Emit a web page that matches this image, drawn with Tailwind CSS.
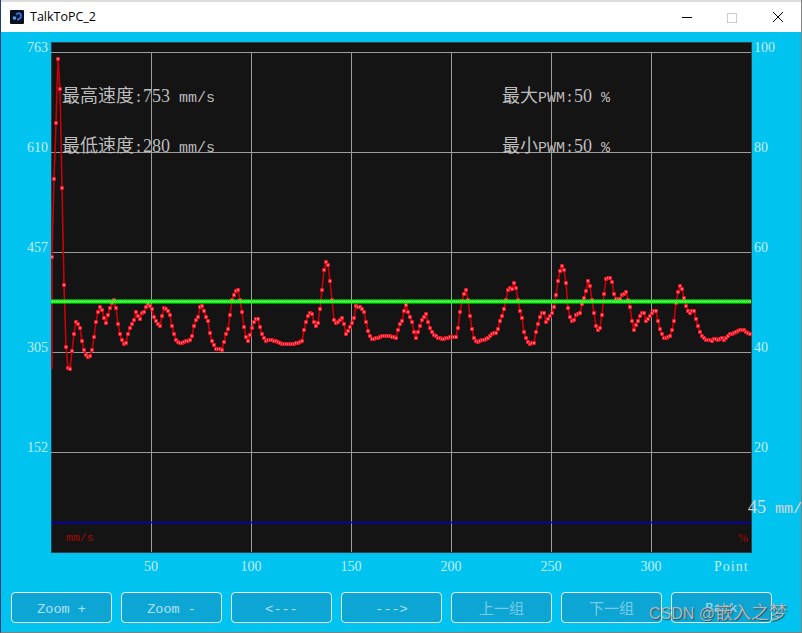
<!DOCTYPE html>
<html>
<head>
<meta charset="utf-8">
<script src="https://cdn.jsdelivr.net/npm/@tailwindcss/browser@4"></script>
</head>
<body class="bg-[#00c3ef]">
<div class="w-[802px] h-[633px] overflow-hidden relative flex flex-col bg-[#00c3ef] border-l border-l-[#1c3f7c] border-r border-r-[#808080] border-b border-b-[#808080] font-['Liberation_Serif','Noto_Sans_CJK_SC',serif]">
  <!-- top strip + title bar -->
  <div class="h-[2px] bg-[#dcdcdc] shrink-0"></div>
  <div class="h-[30px] bg-white flex items-center shrink-0 relative">
    <svg class="ml-[9px] w-[14px] h-[14px]" viewBox="0 0 14 14">
      <rect width="14" height="14" rx="1" fill="#0a0f1e"/>
      <path d="M6 4.5 C8 2.5 11 3 11 5.5 C11 8 9 9.5 7 9.5" fill="none" stroke="#2f6fe0" stroke-width="2"/>
      <circle cx="4.5" cy="8" r="1.8" fill="#5aa0f0"/>
    </svg>
    <span class="ml-[6px] text-[12.5px] text-black font-['Open_Sans',sans-serif]">TalkToPC_2</span>
    <svg class="ml-auto mr-[33px] w-[12px] h-[12px]" viewBox="0 0 12 12"><path d="M1 6.5 H11" stroke="#000" fill="none"/></svg>
    <svg class="mr-[35px] w-[11px] h-[11px]" viewBox="0 0 11 11"><rect x="1.5" y="1.5" width="9" height="9" fill="none" stroke="#cccccc"/></svg>
    <svg class="mr-[17px] w-[12px] h-[12px]" viewBox="0 0 12 12"><path d="M1 1 L11 11 M11 1 L1 11" stroke="#000" fill="none"/></svg>
  </div>

  <!-- chart row -->
  <div class="flex h-[521px] pt-[10px] shrink-0">
    <!-- left axis -->
    <div class="w-[50px] shrink-0 flex flex-col items-end pr-[3px] text-[14px] leading-[14px] text-[#c4edf8]">
      <span class="h-[100px] mt-[-1px]">763</span>
      <span class="h-[100px]">610</span>
      <span class="h-[100px]">457</span>
      <span class="h-[100px]">305</span>
      <span class="h-[100px]">152</span>
    </div>
    <!-- plot -->
    <div class="relative w-[701px] h-[511px] shrink-0 bg-[#141414] border border-[#3a3f44]">
      <svg id="plot" class="absolute left-[-1px] top-[-1px]" width="701" height="511" viewBox="51 42 701 511">
        <defs>
          <marker id="dot" markerUnits="userSpaceOnUse" markerWidth="6" markerHeight="6" refX="3" refY="3" overflow="visible">
            <rect x="1" y="1" width="4" height="4" rx="0.8" fill="#f01020"/>
            <rect x="2.3" y="2.3" width="1.4" height="1.4" fill="#ffd8d8"/>
          </marker>
        </defs>
        <g stroke="#9c9c9c" stroke-width="1" shape-rendering="crispEdges" fill="none">
          <path d="M51 52.5H751 M51 152.5H751 M51 252.5H751 M51 352.5H751 M51 452.5H751"/>
          <path d="M151.5 52V552 M251.5 52V552 M351.5 52V552 M451.5 52V552 M551.5 52V552 M651.5 52V552"/>
        </g>
        <path d="M51 522.5H751" stroke="#0000c8" stroke-width="1.4" fill="none"/>
        <polyline id="curve" fill="none" stroke="#c80008" stroke-width="1.6" stroke-linejoin="round" marker-mid="url(#dot)" marker-end="url(#dot)"/>
        <path d="M50 301.5H751" stroke="#10ff10" stroke-width="4" fill="none"/>
        <path d="M50 301.5H751" stroke="#b8ffb8" stroke-width="1.2" stroke-dasharray="1 1" fill="none"/>
      </svg>
      <div class="absolute left-[10px] top-[43px] text-[#bdbdbd] text-[18px] leading-[20px] whitespace-nowrap">最高速度<span class="font-['Liberation_Mono',monospace] text-[15px]">:</span>753<span class="font-['Liberation_Mono',monospace] text-[15px]"> mm/s</span></div>
      <div class="absolute left-[10px] top-[93px] text-[#bdbdbd] text-[18px] leading-[20px] whitespace-nowrap">最低速度<span class="font-['Liberation_Mono',monospace] text-[15px]">:</span>280<span class="font-['Liberation_Mono',monospace] text-[15px]"> mm/s</span></div>
      <div class="absolute left-[450px] top-[43px] text-[#bdbdbd] text-[18px] leading-[20px] whitespace-nowrap">最大<span class="font-['Liberation_Mono',monospace] text-[15px]">PWM:</span>50<span class="font-['Liberation_Mono',monospace] text-[15px]"> %</span></div>
      <div class="absolute left-[450px] top-[93px] text-[#bdbdbd] text-[18px] leading-[20px] whitespace-nowrap">最小<span class="font-['Liberation_Mono',monospace] text-[15px]">PWM:</span>50<span class="font-['Liberation_Mono',monospace] text-[15px]"> %</span></div>
      <div class="absolute left-[14px] top-[488px] text-[#a80808] text-[11.5px] leading-[14px] font-['Liberation_Mono',monospace]">mm/s</div>
      <div class="absolute left-[686px] top-[488px] text-[#a80808] text-[12px] leading-[14px]">%</div>
    </div>
    <!-- right axis -->
    <div class="relative flex-1 flex flex-col pl-[2px] text-[14px] leading-[14px] text-[#c4edf8]">
      <span class="h-[100px] mt-[-1px]">100</span>
      <span class="h-[100px]">80</span>
      <span class="h-[100px]">60</span>
      <span class="h-[100px]">40</span>
      <span class="h-[100px]">20</span>
      <span class="absolute left-[-4px] top-[455px] text-[18px] leading-[20px] whitespace-nowrap text-[#d8d8d8]">45<span class="font-['Liberation_Mono',monospace] text-[15px]"> mm/s</span></span>
    </div>
  </div>

  <!-- x axis -->
  <div class="flex h-[39px] pl-[130px] items-start pt-[6px] text-[14px] leading-[16px] text-[#c4edf8] shrink-0">
    <span class="w-[40px] text-center">50</span>
    <span class="w-[60px] ml-[50px] text-center">100</span>
    <span class="w-[60px] ml-[40px] text-center">150</span>
    <span class="w-[60px] ml-[40px] text-center">200</span>
    <span class="w-[60px] ml-[40px] text-center">250</span>
    <span class="w-[60px] ml-[40px] text-center">300</span>
    <span class="ml-[33px] tracking-[1px]">Point</span>
  </div>

  <!-- buttons -->
  <div class="flex gap-[9px] pl-[10px] h-[31px] text-[13.5px] text-white/65 shrink-0">
    <div class="w-[101px] h-[31px] pt-[5px] rounded-[4px] border border-[#e6f7fc] bg-[#0da6d4] flex items-center justify-center font-['Liberation_Mono',monospace]">Zoom +</div>
    <div class="w-[101px] h-[31px] pt-[5px] rounded-[4px] border border-[#e6f7fc] bg-[#0da6d4] flex items-center justify-center font-['Liberation_Mono',monospace]">Zoom -</div>
    <div class="w-[101px] h-[31px] pt-[5px] rounded-[4px] border border-[#e6f7fc] bg-[#0da6d4] flex items-center justify-center font-['Liberation_Mono',monospace]">&lt;---</div>
    <div class="w-[101px] h-[31px] pt-[5px] rounded-[4px] border border-[#e6f7fc] bg-[#0da6d4] flex items-center justify-center font-['Liberation_Mono',monospace]">---&gt;</div>
    <div class="w-[101px] h-[31px] pt-[3px] rounded-[4px] border border-[#e6f7fc] bg-[#0da6d4] flex items-center justify-center text-[15px] text-white/45">上一组</div>
    <div class="w-[101px] h-[31px] pt-[3px] rounded-[4px] border border-[#e6f7fc] bg-[#0da6d4] flex items-center justify-center text-[15px] text-white/45">下一组</div>
    <div class="w-[101px] h-[31px] pt-[3px] rounded-[4px] border border-[#e6f7fc] bg-[#0da6d4] flex items-center justify-center font-['Liberation_Mono',monospace]">Back</div>
  </div>

  <!-- watermark -->
  <div class="absolute left-[648px] top-[603px] whitespace-nowrap text-[16px] leading-[20px] text-[#a9bcc6] [text-shadow:1px_1px_1px_#3a4a52] font-['Liberation_Sans','Noto_Sans_CJK_SC',sans-serif]">CSDN @<span class="text-[18px]">嵌入之梦</span></div>
</div>
<script>
var ys=[369,257,179,123,59,89,188,
285,347,368,369,351,334,322,324,328,341,350,355,357,356,350,337,322,312,307,310,318,323,315,308,303,300,308,324,334,340,344,343,334,328,324,320,312,316,319,313,312,307,304,306,309,317,321,324,326,316,308,309,311,315,326,334,340,342,343,343,342,341,341,340,336,326,320,317,307,306,311,317,321,333,341,345,349,349,349,350,342,334,329,315,300,295,291,290,300,312,327,337,341,335,328,322,319,319,327,334,338,341,340,
340,
340,341,341,342,343,344,344,344,344,344,344,344,343,343,342,341,330,322,316,313,314,322,326,323,309,290,270,262,265,281,300,320,323,322,320,318,324,334,331,327,323,318,306,307,307,309,312,322,331,336,339,339,338,338,337,336,336,336,336,336,337,337,338,330,324,321,311,305,312,317,322,332,338,332,326,320,317,314,322,328,332,335,336,338,338,339,339,338,338,337,337,337,337,328,312,301,294,290,300,316,329,338,341,342,341,340,340,339,338,336,334,333,333,329,321,316,309,300,290,288,289,283,288,300,311,318,332,338,342,344,343,343,332,324,317,
313,313,322,319,316,313,307,295,281,271,266,270,283,308,317,321,320,315,314,313,304,298,291,281,286,300,313,326,330,328,315,294,279,278,278,282,294,299,299,299,295,294,292,300,307,321,330,325,321,316,313,313,321,319,316,313,311,311,321,329,334,338,338,337,336,330,321,303,292,286,289,298,306,311,313,311,311,319,326,332,336,338,340,340,340,341,339,339,340,339,338,340,338,336,334,334,333,332,331,330,330,330,332,333,334];
var x0=750-(ys.length-2)*2;
var pts=ys.map(function(y,i){return (i===0?x0:x0+(i-1)*2)+','+y;}).join(' ');
document.getElementById('curve').setAttribute('points',pts);
</script>
</body>
</html>
